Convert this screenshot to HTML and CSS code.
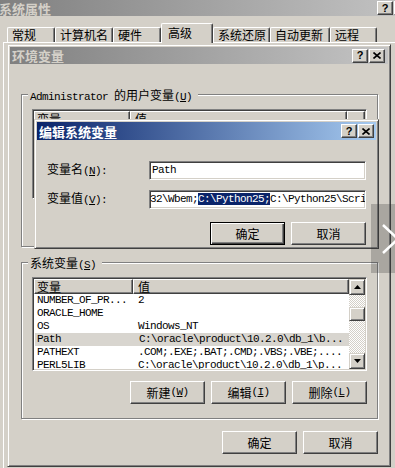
FILE: index.html
```html
<!DOCTYPE html>
<html lang="zh-CN">
<head>
<meta charset="utf-8">
<title>环境变量</title>
<link rel="stylesheet" href="styles.css">
</head>
<body>
<div class="sysprop">
  <div class="caption inactive top">
    <span class="cap-text">系统属性</span>
    <div class="cap-btns">
      <span class="cbtn">?</span>
      <span class="cbtn"><svg width="8" height="7" viewBox="0 0 8 7"><path d="M0.5 0.5 L7.5 6.5 M7.5 0.5 L0.5 6.5" stroke="#000" stroke-width="1.6"/></svg></span>
    </div>
  </div>
  <div class="tabs">
    <div class="tab w48">常规</div>
    <div class="tab w58">计算机名</div>
    <div class="tab w48">硬件</div>
    <div class="tab active">高级</div>
    <div class="tab w57">系统还原</div>
    <div class="tab w60">自动更新</div>
    <div class="tab w47">远程</div>
  </div>
  <div class="tabpage"></div>
</div>

<div class="dlg env">
  <div class="caption inactive">
    <span class="cap-text">环境变量</span>
    <div class="cap-btns">
      <span class="cbtn">?</span>
      <span class="cbtn"><svg width="8" height="7" viewBox="0 0 8 7"><path d="M0.5 0.5 L7.5 6.5 M7.5 0.5 L0.5 6.5" stroke="#000" stroke-width="1.6"/></svg></span>
    </div>
  </div>
  <div class="env-body">
    <div class="group user">
      <div class="legend"><span class="m">Administrator </span>的用户变量<span class="m">(<u>U</u>)</span></div>
      <div class="list short">
        <div class="lv-main">
          <div class="lv-head">
            <div class="hc u1">变量</div>
            <div class="hc u2">值</div>
            <div class="hc u3"></div>
          </div>
          <div class="row"><span class="c u1 m">TEMP</span><span class="c c2 m">C:\Documents and Settings\Admin...</span></div>
          <div class="row"><span class="c u1 m">TMP</span><span class="c c2 m">C:\Documents and Settings\Admin...</span></div>
        </div>
      </div>
      <div class="btnrow">
        <div class="btn">新建<span class="m">(<u>N</u>)</span></div>
        <div class="btn">编辑<span class="m">(<u>E</u>)</span></div>
        <div class="btn">删除<span class="m">(<u>D</u>)</span></div>
      </div>
    </div>

    <div class="group sys">
      <div class="legend">系统变量<span class="m">(<u>S</u>)</span></div>
      <div class="list">
        <div class="lv-main">
          <div class="lv-head">
            <div class="hc c1">变量</div>
            <div class="hc c2h">值</div>
          </div>
          <div class="row"><span class="c c1 m">NUMBER_OF_PR...</span><span class="c c2 m">2</span></div>
          <div class="row"><span class="c c1 m">ORACLE_HOME</span><span class="c c2 m"></span></div>
          <div class="row"><span class="c c1 m">OS</span><span class="c c2 m">Windows_NT</span></div>
          <div class="row sel"><span class="c c1 m">Path</span><span class="c c2 m">C:\oracle\product\10.2.0\db_1\b...</span></div>
          <div class="row"><span class="c c1 m">PATHEXT</span><span class="c c2 m">.COM;.EXE;.BAT;.CMD;.VBS;.VBE;....</span></div>
          <div class="row"><span class="c c1 m">PERL5LIB</span><span class="c c2 m">C:\oracle\product\10.2.0\db_1\p...</span></div>
        </div>
        <div class="vscroll">
          <div class="sb-btn"><svg width="7" height="4" viewBox="0 0 7 4"><polygon points="3.5,0 7,4 0,4" fill="#000"/></svg></div>
          <div class="sb-gap"></div>
          <div class="sb-thumb"></div>
          <div class="sb-fill"></div>
          <div class="sb-btn"><svg width="7" height="4" viewBox="0 0 7 4"><polygon points="0,0 7,0 3.5,4" fill="#000"/></svg></div>
        </div>
      </div>
      <div class="btnrow">
        <div class="btn">新建<span class="m">(<u>W</u>)</span></div>
        <div class="btn">编辑<span class="m">(<u>I</u>)</span></div>
        <div class="btn">删除<span class="m">(<u>L</u>)</span></div>
      </div>
    </div>

    <div class="btnrow footer">
      <div class="btn">确定</div>
      <div class="btn">取消</div>
    </div>
  </div>
</div>

<div class="dlg edit">
  <div class="caption active">
    <span class="cap-text">编辑系统变量</span>
    <div class="cap-btns">
      <span class="cbtn">?</span>
      <span class="cbtn"><svg width="8" height="7" viewBox="0 0 8 7"><path d="M0.5 0.5 L7.5 6.5 M7.5 0.5 L0.5 6.5" stroke="#000" stroke-width="1.6"/></svg></span>
    </div>
  </div>
  <div class="edit-body">
    <div class="form">
      <label class="lbl">变量名<span class="m">(<u>N</u>):</span></label>
      <div class="field m">Path</div>
      <label class="lbl">变量值<span class="m">(<u>V</u>):</span></label>
      <div class="field m scrolled">32\Wbem;<span class="selected">C:\Python25;</span>C:\Python25\Scripts</div>
    </div>
    <div class="btnrow">
      <div class="btn default">确定</div>
      <div class="btn">取消</div>
    </div>
  </div>
</div>

<div class="next">
  <svg width="24" height="69" viewBox="0 0 24 69"><polyline points="12,21 27,35 12,49" fill="none" stroke="#fff" stroke-width="2.5"/></svg>
</div>
</body>
</html>
```

FILE: styles.css
```css
* { box-sizing: border-box; }
html, body { margin: 0; padding: 0; }
body {
  width: 395px;
  height: 468px;
  overflow: hidden;
  position: relative;
  background: #d4d0c8;
  font-family: "Noto Sans CJK SC", "Noto Sans", sans-serif;
  font-size: 12px;
  line-height: 15px;
  color: #000;
}
.m {
  font-family: "Liberation Mono", "DejaVu Sans Mono", monospace;
  font-size: 11px;
  letter-spacing: -0.6px;
}
u { text-decoration: underline; text-underline-offset: 1px; }

/* captions */
.caption {
  display: flex;
  align-items: center;
  padding: 0 2px;
  font-weight: bold;
  font-size: 13px;
  white-space: nowrap;
  flex-shrink: 0;
}
.caption.inactive { background: linear-gradient(to right, #808080, #c4c4c4); color: #d4d0c8; }
.caption.active { background: linear-gradient(to right, #0a246a, #a6caf0); color: #fff; }
.cap-btns { margin-left: auto; display: flex; gap: 1px; }
.cbtn {
  width: 16px;
  height: 14px;
  background: #d4d0c8;
  border: 1px solid;
  border-color: #fff #404040 #404040 #fff;
  box-shadow: inset -1px -1px #808080;
  display: flex;
  align-items: center;
  justify-content: center;
  color: #000;
  font: bold 11px/1 "Liberation Sans", sans-serif;
}
.caption.top { height: 16px; width: 412px; }
.caption.top .cap-text { margin-left: -3px; }

/* tabs */
.tabs {
  display: flex;
  align-items: flex-end;
  height: 19px;
  margin-top: 7px;
  padding-left: 7px;
}
.tab {
  flex-shrink: 0;
  height: 15px;
  line-height: 13px;
  padding-left: 4px;
  background: #d4d0c8;
  border-top: 1px solid #fff;
  border-left: 1px solid #fff;
  border-right: 1px solid #404040;
  box-shadow: inset -1px 0 #808080;
  border-radius: 2px 2px 0 0;
}
.w47 { width: 47px; }
.w48 { width: 48px; }
.w57 { width: 57px; }
.w58 { width: 58px; }
.w60 { width: 60px; }
.tab.active {
  width: 52px;
  height: 20px;
  line-height: 17px;
  padding-left: 6px;
  margin-bottom: -1px;
  position: relative;
  z-index: 1;
}
.tabpage {
  margin-left: 3px;
  height: 426px;
  border-top: 1px solid #fff;
  border-left: 1px solid #fff;
}

/* dialogs */
.dlg {
  position: absolute;
  background: #d4d0c8;
  border: 1px solid;
  border-color: #d4d0c8 #404040 #404040 #d4d0c8;
  box-shadow: inset 1px 1px #fff, inset -1px -1px #808080;
  padding: 2px;
  display: flex;
  flex-direction: column;
}
.env { left: 7px; top: 44px; width: 384px; height: 423px; }
.env > .caption { height: 17px; padding-right: 3px; }
.edit { left: 34px; top: 119px; width: 345px; height: 130px; }
.edit > .caption { height: 18px; }

.env-body { padding: 0 10px 0 11px; }

/* group boxes */
.group {
  border: 1px solid #808080;
  box-shadow: inset 1px 1px #fff, 1px 1px #fff;
  padding: 0 10px 14px 10px;
}
.group.user { margin-top: 30px; }
.group.sys { margin-top: 15px; }
.legend {
  width: fit-content;
  margin: -8px 0 0 -4px;
  padding: 0 6px 0 2px;
  background: #d4d0c8;
  line-height: 15px;
  height: 15px;
  white-space: nowrap;
}

/* list view */
.list {
  margin-top: 7px;
  height: 94px;
  background: #fff;
  border: 1px solid;
  border-color: #808080 #fff #fff #808080;
  box-shadow: inset 1px 1px #404040, inset -1px -1px #d4d0c8;
  padding: 1px;
  display: flex;
  overflow: hidden;
}
.list.short { height: 90px; }
.lv-main { flex: 1; overflow: hidden; }
.lv-head { display: flex; height: 15px; }
.hc {
  flex-shrink: 0;
  height: 15px;
  line-height: 13px;
  padding-left: 2px;
  background: #d4d0c8;
  border: 1px solid;
  border-color: #fff #404040 #404040 #fff;
  box-shadow: inset -1px -1px #808080;
  white-space: nowrap;
  overflow: hidden;
}
.hc.c1 { width: 99px; }
.hc.c2h { flex: 1; padding-left: 4px; }
.hc.u1 { width: 96px; }
.hc.u2 { width: 217px; padding-left: 4px; }
.hc.u3 { flex: 1; }
.row { display: flex; height: 13px; line-height: 13px; white-space: nowrap; }
.row.sel { background: #d8d5cf; margin-left: 1px; }
.row.sel .c1 { padding-left: 2px; }
.c { overflow: hidden; }
.c.c1, .c.u1 { width: 99px; padding-left: 3px; flex-shrink: 0; }
.c.u1 { width: 96px; }
.c.c2 { flex: 1; padding-left: 5px; }

.vscroll {
  width: 16px;
  flex-shrink: 0;
  display: flex;
  flex-direction: column;
  background: repeating-conic-gradient(#fff 0% 25%, #d4d0c8 0% 50%) 0 0 / 2px 2px;
}
.sb-btn, .sb-thumb {
  background: #d4d0c8;
  border: 1px solid;
  border-color: #d4d0c8 #404040 #404040 #d4d0c8;
  box-shadow: inset 1px 1px #fff, inset -1px -1px #808080;
}
.sb-btn { height: 16px; display: flex; align-items: center; justify-content: center; }
.sb-gap { height: 12px; }
.sb-thumb { height: 14px; }
.sb-fill { flex: 1; }

/* buttons */
.btnrow { display: flex; justify-content: flex-end; gap: 6px; margin-top: 10px; }
.btnrow.footer { margin-top: 12px; }
.btn {
  width: 75px;
  height: 23px;
  background: #d4d0c8;
  border: 1px solid;
  border-color: #fff #404040 #404040 #fff;
  box-shadow: inset -1px -1px #808080;
  display: flex;
  align-items: center;
  justify-content: center;
  line-height: 15px;
  white-space: nowrap;
}
.btn.default {
  border-color: #000;
  box-shadow: inset 1px 1px #fff, inset -1px -1px #404040, inset -2px -2px #808080;
}

/* edit dialog */
.edit-body { padding: 19px 10px 0 10px; }
.form {
  display: grid;
  grid-template-columns: 102px 217px;
  row-gap: 7px;
  align-items: center;
}
.lbl { line-height: 19px; white-space: nowrap; }
.field {
  height: 19px;
  background: #fff;
  border: 1px solid;
  border-color: #808080 #fff #fff #808080;
  box-shadow: inset 1px 1px #404040, inset -1px -1px #d4d0c8;
  padding: 1px 2px 0 2px;
  line-height: 15px;
  white-space: nowrap;
  overflow: hidden;
}
.field.scrolled { text-indent: -2px; }
.selected { background: #0a246a; color: #fff; }
.edit .btnrow { margin-top: 12px; }

/* page "next" overlay */
.next {
  position: absolute;
  left: 371px;
  top: 204px;
  width: 24px;
  height: 69px;
  background: rgba(40, 40, 40, 0.25);
}
.next svg { display: block; }
```
